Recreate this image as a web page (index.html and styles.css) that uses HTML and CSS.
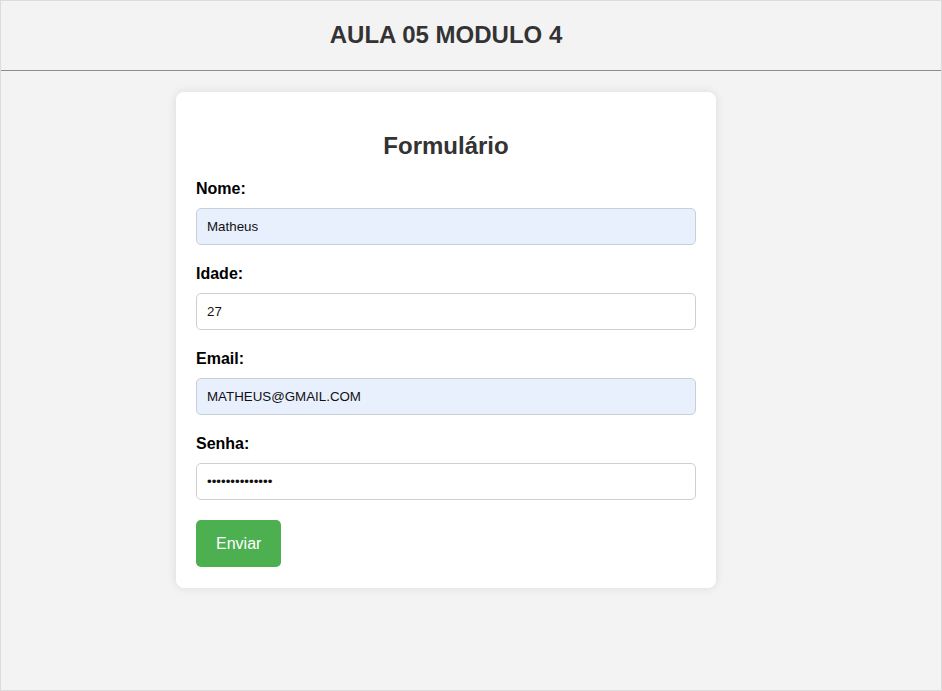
FILE: index.html
```html
<!DOCTYPE html>
<html lang="pt-BR">
<head>
<meta charset="UTF-8">
<title>Aula 05 Modulo 4</title>
<link rel="stylesheet" href="styles.css">
</head>
<body>
<header class="topbar">
  <h1 class="topbar-title">AULA 05 MODULO 4</h1>
</header>
<main class="main">
  <form class="card">
    <h2 class="card-title">Formulário</h2>
    <label class="field-label" for="nome">Nome:</label>
    <input class="field-input autofill" id="nome" type="text" value="Matheus">
    <label class="field-label" for="idade">Idade:</label>
    <input class="field-input" id="idade" type="text" value="27">
    <label class="field-label" for="email">Email:</label>
    <input class="field-input autofill" id="email" type="text" value="MATHEUS@GMAIL.COM">
    <label class="field-label" for="senha">Senha:</label>
    <input class="field-input" id="senha" type="password" value="12345678901234">
    <button class="submit" type="button">Enviar</button>
  </form>
</main>
</body>
</html>
```

FILE: styles.css
```css
html, body {
  margin: 0;
  padding: 0;
}
body {
  font-family: "Liberation Sans", Arial, sans-serif;
  background: #f3f3f3;
  border: 1px solid #dcdcdc;
  min-height: 100vh;
  box-sizing: border-box;
}
.topbar {
  height: 70px;
  box-sizing: border-box;
  padding: 20px 50px 21px 0;
  border-bottom: 1px solid #8c8c8c;
  background: #f3f3f3;
}
.topbar-title {
  margin: 0;
  text-align: center;
  font-size: 24px;
  line-height: 28px;
  font-weight: bold;
  color: #333;
}
.main {
  padding: 21px 50px 0 0;
}
.card {
  width: 540px;
  box-sizing: border-box;
  margin: 0 auto;
  background: #fff;
  border-radius: 8px;
  padding: 20px 20px 21px;
  box-shadow: 0 0 10px rgba(0, 0, 0, 0.1);
  display: flex;
  flex-direction: column;
  align-items: stretch;
}
.card-title {
  margin: 20px 0 20px;
  text-align: center;
  font-size: 24px;
  line-height: 28px;
  color: #333;
}
.field-label {
  display: block;
  font-size: 16px;
  line-height: 18px;
  font-weight: bold;
  color: #000;
  margin-bottom: 10px;
}
.field-input {
  display: block;
  height: 37px;
  box-sizing: border-box;
  padding: 10px;
  margin: 0 0 20px;
  border: 1px solid #cfcfcf;
  border-radius: 5px;
  font-family: "Liberation Sans", Arial, sans-serif;
  font-size: 13.33px;
  color: #111;
  background: #fff;
  outline: none;
}
.field-input.autofill {
  background: #e8f0fe;
  border-color: #c9cfd8;
}
.submit {
  align-self: flex-start;
  margin: 0;
  padding: 14px 20px;
  line-height: 19px;
  font-family: "Liberation Sans", Arial, sans-serif;
  font-size: 16px;
  color: #fff;
  background: #4caf50;
  border: none;
  border-radius: 5px;
  cursor: pointer;
}
```
